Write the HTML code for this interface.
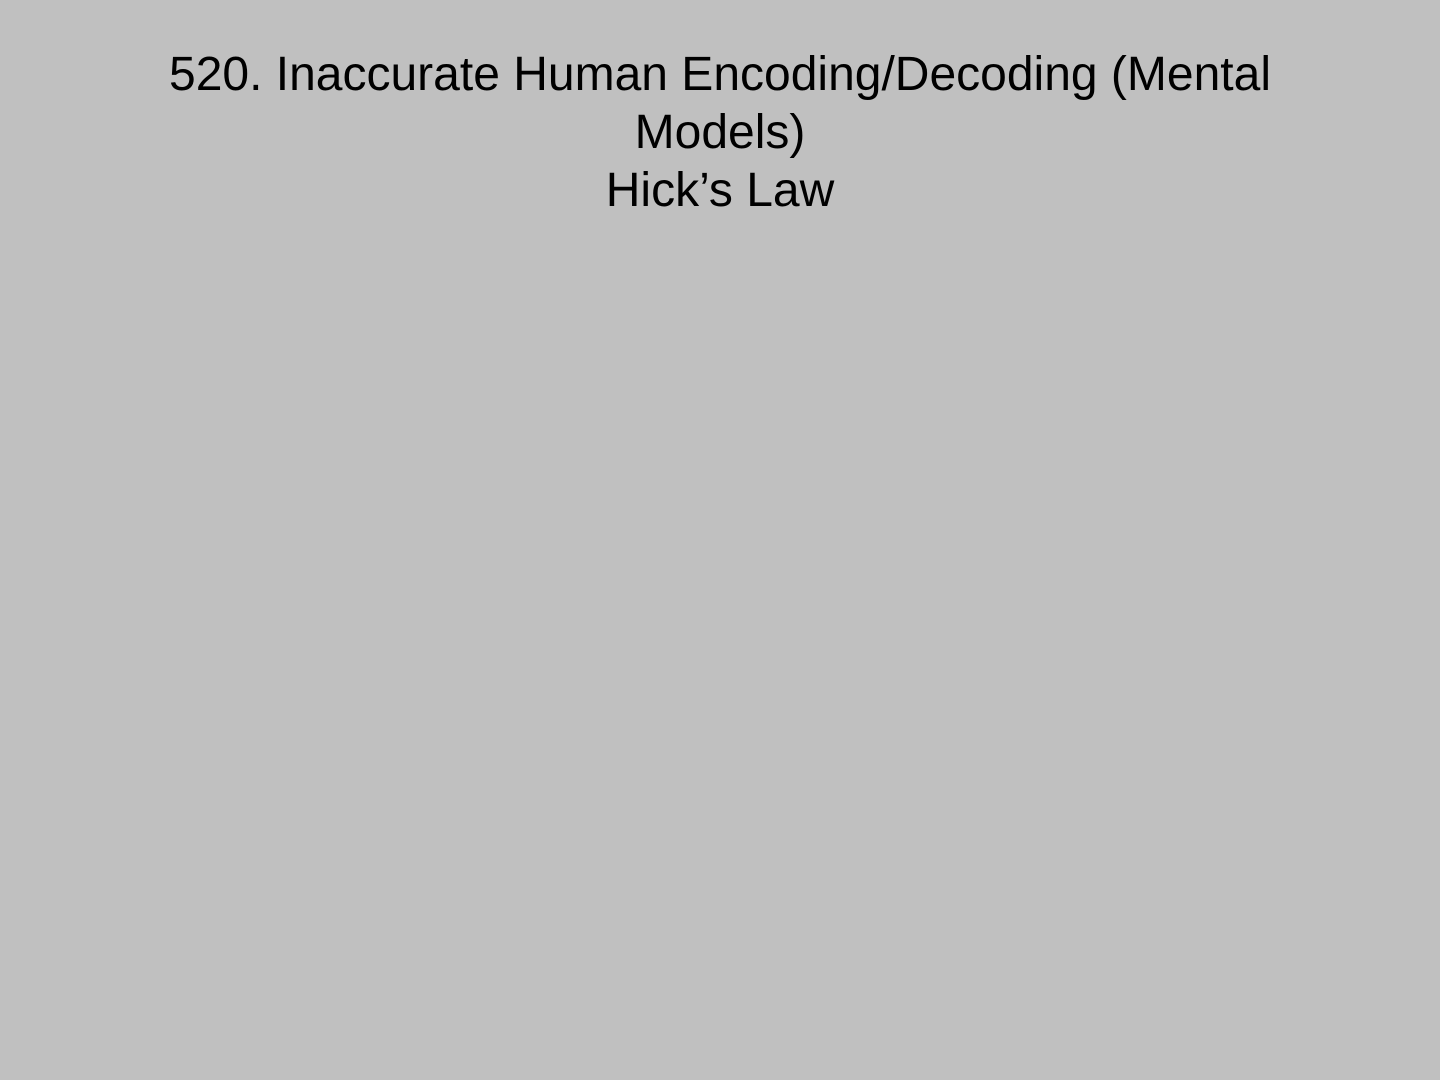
<!DOCTYPE html>
<html><head><meta charset="utf-8"><style>
html,body{margin:0;padding:0;}
body{width:1440px;height:1080px;background:#c0c0c0;overflow:hidden;font-family:"Liberation Sans",Arial,sans-serif;}
.t{position:absolute;top:46px;left:0;width:1440px;text-align:center;font-size:48px;line-height:58px;color:#000;}
</style></head><body>
<div class="t">520. Inaccurate Human Encoding/Decoding (Mental<br>Models)<br>Hick’s Law</div>
</body></html>
